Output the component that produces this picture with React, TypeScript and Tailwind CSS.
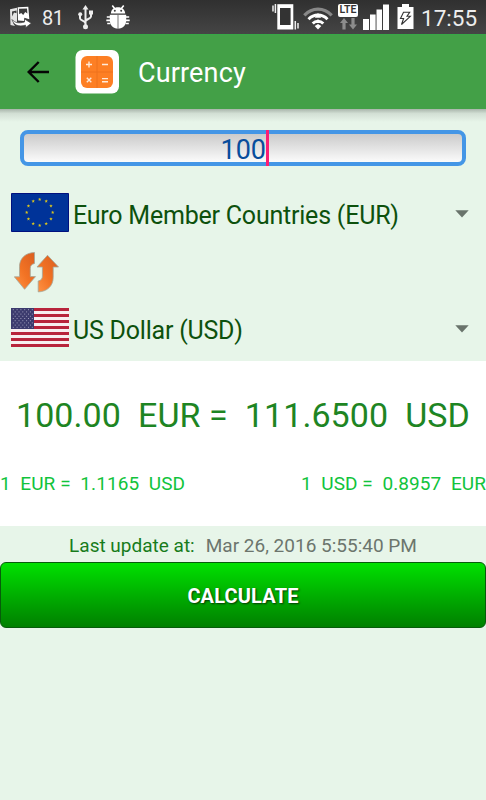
import { useState } from 'react';

const stars = Array.from({ length: 12 }, (_, i) => {
  const angle = (i * Math.PI) / 6;
  return { x: 28.7 + 13 * Math.sin(angle), y: 19.4 - 13 * Math.cos(angle) };
});

const stripes = [0, 2, 4, 6, 8, 10, 12];
const cantonRows = [0, 1, 2, 3, 4, 5, 6, 7, 8];

function GalleryIcon() {
  return (
    <svg width="23" height="22" viewBox="0 0 23 22" fill="none">
      <path d="M1 3.2 8 1.8v14.700l-4 .5 2 3-4.500-1z" fill="#e4e4e4" />
      <path d="M3 5.500 7.500 4.600v2.600L5 6.500l-1.800 4z" fill="#3c3c3c" />
      <path d="M8.600 1.300 19.300.8l1 12.500-5-1.500v3.200L9 14.600z" fill="#fff" />
      <path d="m10 2.800 8-.4.4 5.200-2.200-1.600-2 3-2-2-2 1.200z" fill="#3c3c3c" />
      <path d="M3 13.500c3 3.500 7 4 12.500 2.500v-3l6.800 4.300-5.800 4.400v-2.500C10 21 4.500 19.500 3 13.500z" fill="#fff" stroke="#3c3c3c" strokeWidth=".7" />
    </svg>
  );
}

function UsbIcon() {
  return (
    <svg width="15" height="25" viewBox="0 0 15 25" fill="none" stroke="#eee" strokeWidth="2">
      <path d="M7.5 3v18M2 10v3.200c0 2.500 5.500 2.600 5.500 5.500M13 8v3.500c0 2.500-5.500 2.500-5.500 5" />
      <path d="m7.5 0 3 4.500h-6z" fill="#eee" stroke="none" />
      <circle cx="2.2" cy="9.300" r="2" fill="#eee" stroke="none" />
      <path d="M11 5.500h4v4h-4z" fill="#eee" stroke="none" />
      <circle cx="7.500" cy="21.800" r="2.500" fill="#eee" stroke="none" />
    </svg>
  );
}

function BugIcon() {
  return (
    <svg width="24" height="24" viewBox="0 0 24 24" fill="#fff">
      <path d="M6.300.5 9 4M17.700.5 15 4" stroke="#fff" strokeWidth="1.600" />
      <path d="M4.800 8.500C5.200 4.300 8 2.200 12 2.200s6.800 2.100 7.200 6.300z" />
      <circle cx="8.800" cy="5.700" r="1" fill="#3b3b3b" />
      <circle cx="15.200" cy="5.700" r="1" fill="#3b3b3b" />
      <path d="M3.800 9.700h16.400v5.500c0 4.800-3.200 8.300-8.200 8.300s-8.200-3.500-8.200-8.300z" />
      <path d="M12 10v13.500" stroke="#666" strokeWidth=".9" />
      <path d="M4 12H.8M4 15.300H.3M4.500 18.500H1.200M20 12h3.200M20 15.300h3.700M19.500 18.500h3.300" stroke="#fff" strokeWidth="1.700" />
    </svg>
  );
}

function VibrateIcon() {
  return (
    <svg width="27" height="27" viewBox="0 0 27 27" fill="none">
      <path d="M5.300 1.200h16v25.300h-16z" fill="#fff" />
      <path d="M8 5h10.600v17H8z" fill="#333" />
      <path d="M3.400 1v9M1 2.500v6M23.300 18v8.500M26 20v5.500" stroke="#eee" strokeWidth="1.500" />
    </svg>
  );
}

function WifiIcon() {
  return (
    <svg width="30" height="23" viewBox="0 0 30 23" fill="none">
      <path d="M1.300 8.300c7.800-8.200 19.600-8.200 27.400 0" stroke="#888" strokeWidth="3.200" />
      <path d="M5.500 12.300c5.500-5.600 13.500-5.600 19 0M9.700 16.500c3.100-3 7.500-3 10.600 0" stroke="#fff" strokeWidth="3" />
      <path d="m11.700 19 3.300-2 3.300 2-3.300 3.500z" fill="#fff" />
      <path d="m15 6 3.200 4.800h-6.400zM15 12l2.500 4h-5z" fill="#fff" />
    </svg>
  );
}

function LteIcon() {
  return (
    <div className="flex w-5 flex-col items-center">
      <div className="flex h-[13px] w-5 items-center justify-center rounded-[2px] bg-white text-[10.5px] font-semibold leading-none text-[#333]">LTE</div>
      <svg width="17" height="12" viewBox="0 0 17 12" className="mt-px" fill="#8c8c8c">
        <path d="M4 0 8 5H5.600v6.500H2.400V5H0zM13 11.500 9 6.500h2.400V0h3.200v6.500H17z" />
      </svg>
    </div>
  );
}

function SignalIcon() {
  return (
    <svg width="27" height="26" viewBox="0 0 27 26" fill="#fff">
      <path d="M0 15h6v11H0zM7 10.500h5.600V26H7zM13.500 5.500H19V26h-5.500zM20 .5h6V26h-6z" />
    </svg>
  );
}

function BatteryIcon() {
  return (
    <svg width="17" height="25" viewBox="0 0 17 25" fill="none">
      <path d="M5 0h7v3h4.500v22H.5V3H5z" fill="#fff" />
      <path d="M6.500 8.300h6.200l-2.700 4h3.300L4.500 20.500l2.100-6H3.500z" stroke="#333" strokeWidth="1.100" />
    </svg>
  );
}

function StatusBar() {
  return (
    <div className="flex h-[34px] items-center bg-linear-to-b from-[#303030] to-[#454545] text-[#ededed]">
      <div className="ml-[9px]"><GalleryIcon /></div>
      <span className="ml-[10px] mt-[2px] w-[21px] text-[20px] leading-none tracking-[-0.5px]">81</span>
      <div className="ml-[15px]"><UsbIcon /></div>
      <div className="ml-[13px]"><BugIcon /></div>
      <div className="ml-auto flex h-full items-center">
        <div className="mr-[4px] mt-[-2px]"><VibrateIcon /></div>
        <div className="mt-[3px]"><WifiIcon /></div>
        <div className="ml-[5px]"><LteIcon /></div>
        <div className="ml-[5px] mt-[-1px]"><SignalIcon /></div>
        <div className="ml-[7px] mt-[-1px]"><BatteryIcon /></div>
        <span className="ml-[7px] mr-[8px] mt-[3px] w-[57px] whitespace-nowrap text-[22.5px] leading-none">17:55</span>
      </div>
    </div>
  );
}

function CalculatorLogo() {
  return (
    <svg width="44" height="44" viewBox="0 0 44 44" fill="none">
      <rect x=".5" width="43.5" height="43.5" rx="7" fill="#fff" />
      <rect x="6" y="6" width="32" height="32" rx="6" fill="#fd7f24" />
      <path d="M22 6v32M6 22h32" stroke="#ee731c" />
      <path d="M11 14.500h6M14 11.500v6M27 14.500h6M11.800 27.800l4.500 4.500M16.300 27.800l-4.500 4.500M27 28.600h6M27 31.800h6" stroke="#ffead9" strokeWidth="1.400" />
    </svg>
  );
}

function EuFlag() {
  return (
    <svg width="58" height="39" viewBox="0 0 58 39" fill="none">
      <path d="M.5.5h57v38H.5z" fill="#039" stroke="#00107e" />
      {stars.map((star, i) => (
        <path
          key={i}
          transform={`translate(${star.x} ${star.y})`}
          d="M0-1.700.5-.6h1.200L.7.300l.4 1.200L0 .8l-1.100.7.4-1.200-1-.9h1.200z"
          fill="#d9c31f"
        />
      ))}
    </svg>
  );
}

function UsFlag() {
  return (
    <svg width="58" height="39" viewBox="0 0 58 39">
      <path d="M0 0h58v39H0z" fill="#f7eef0" />
      {stripes.map((row) => (
        <rect key={row} x="0" y={row * 3} width="58" height="3" fill="#b8243c" />
      ))}
      <path d="M0 0h23v21H0z" fill="#3c3b6e" />
      {cantonRows.map((row) => (
        <path
          key={row}
          d={`M${row % 2 ? 3.7 : 1.8} ${row * 2.2 + 1.7}h${row % 2 ? 17 : 20}`}
          stroke="#a9a8c4"
          strokeWidth=".9"
          strokeDasharray="1 2.8"
        />
      ))}
    </svg>
  );
}

function SwapIcon() {
  return (
    <svg width="46" height="42" viewBox="0 0 46 42" stroke="#a3a79b" strokeWidth=".8">
      <defs>
        <linearGradient id="swap" x1="0" y1="1" x2="1" y2="0">
          <stop stopColor="#ff9346" />
          <stop offset=".45" stopColor="#f27324" />
          <stop offset="1" stopColor="#d95d20" />
        </linearGradient>
      </defs>
      <path d="M20.500.5v11c-3 .6-4.200 2.300-4.200 5v8.100h5.200L10.600 37.300.300 24.800h5.200V14.700C5.500 6.300 11.500.8 20.500.5z" fill="url(#swap)" />
      <path d="M33.500 3.300 44.500 15h-5.300v10.500c0 8.500-6.200 14.200-15 14.400V29c3-.6 4.200-2.300 4.200-5v-9H23z" fill="url(#swap)" />
    </svg>
  );
}

interface CurrencyRowProps {
  flag: React.ReactNode;
  label: string;
}

function CurrencyRow({ flag, label }: CurrencyRowProps) {
  return (
    <button type="button" className="flex h-[39px] w-full items-center pl-[10.5px] pr-[17px] text-left">
      {flag}
      <span className="ml-[4.5px] mt-[6px] whitespace-nowrap text-[25px] leading-8 tracking-[-0.22px] text-[#0d510d]">{label}</span>
      <svg width="14" height="8" viewBox="0 0 14 8" className="ml-auto mt-[3px]">
        <path d="M.3.300h13.400L7 7.500z" fill="#69736b" />
      </svg>
    </button>
  );
}

export default function App() {
  const [amount, setAmount] = useState('100');

  return (
    <div className="h-[800px] w-[486px] overflow-hidden bg-[#e7f5e9] font-[Roboto,sans-serif]">
      <StatusBar />
      <header className="flex h-[75px] items-center border-t border-[#37a847] bg-[#43a047]">
        <svg width="22" height="22" viewBox="0 0 22 22" className="ml-[27px]" fill="none" stroke="#050505" strokeWidth="2.400">
          <path d="M11.700 1 1.700 11l10 10M1.700 11H22" />
        </svg>
        <div className="ml-[26px]"><CalculatorLogo /></div>
        <h1 className="ml-[19px] mt-[2px] text-[27px] leading-8 tracking-[0.15px] text-white">Currency</h1>
      </header>
      <div className="h-[13px] bg-linear-to-b from-[#a9b5ab] via-[#d2dfd4] via-35% to-[#e7f5e9]" />

      <div className="mx-5 mt-2 flex h-9 items-center justify-center rounded-[8px] border-4 border-[#4496e6] bg-linear-to-b from-[#cbcbcb] to-[#fbfbfb]">
        <input
          type="text"
          value={amount}
          onChange={(e) => setAmount(e.target.value)}
          className="ml-px mt-[3px] w-[48px] text-right text-[27px] leading-7 text-[#084d9c] focus:outline-none"
        />
        <span className="-my-1 h-9 w-[3px] shrink-0 bg-[#fb1e75]" />
      </div>

      <div className="mt-[27px]"><CurrencyRow flag={<EuFlag />} label="Euro Member Countries (EUR)" /></div>
      <button type="button" className="ml-[14px] mt-5 block h-[42px]"><SwapIcon /></button>
      <div className="mt-[14px]"><CurrencyRow flag={<UsFlag />} label="US Dollar (USD)" /></div>

      <section className="mt-[14px] flex h-[165px] flex-col bg-white">
        <p className="mt-[34px] whitespace-pre text-center text-[34px] leading-10 tracking-[0.08px] text-[#1e8523]">100.00  EUR =  111.6500  USD</p>
        <div className="mt-[37px] flex justify-between whitespace-pre text-[19px] leading-6 tracking-[0.08px] text-[#11c33b]">
          <span>1  EUR =  1.1165  USD</span>
          <span>1  USD =  0.8957  EUR</span>
        </div>
      </section>

      <p className="flex h-9 items-center justify-center gap-[11px] pt-[3px] text-[19px] leading-6 text-[#6c756d]">
        <span className="text-[#177c1b]">Last update at:</span>
        <span>Mar 26, 2016 5:55:40 PM</span>
      </p>
      <button
        type="button"
        className="block h-[66px] w-full rounded-[6px] border border-[#075c0b] bg-linear-to-b from-[#00e100] to-[#008000] pt-[2px] text-[20px] font-bold tracking-[0.15px] text-white text-shadow-[1px_1px_2px_#063806]"
      >
        CALCULATE
      </button>
    </div>
  );
}
